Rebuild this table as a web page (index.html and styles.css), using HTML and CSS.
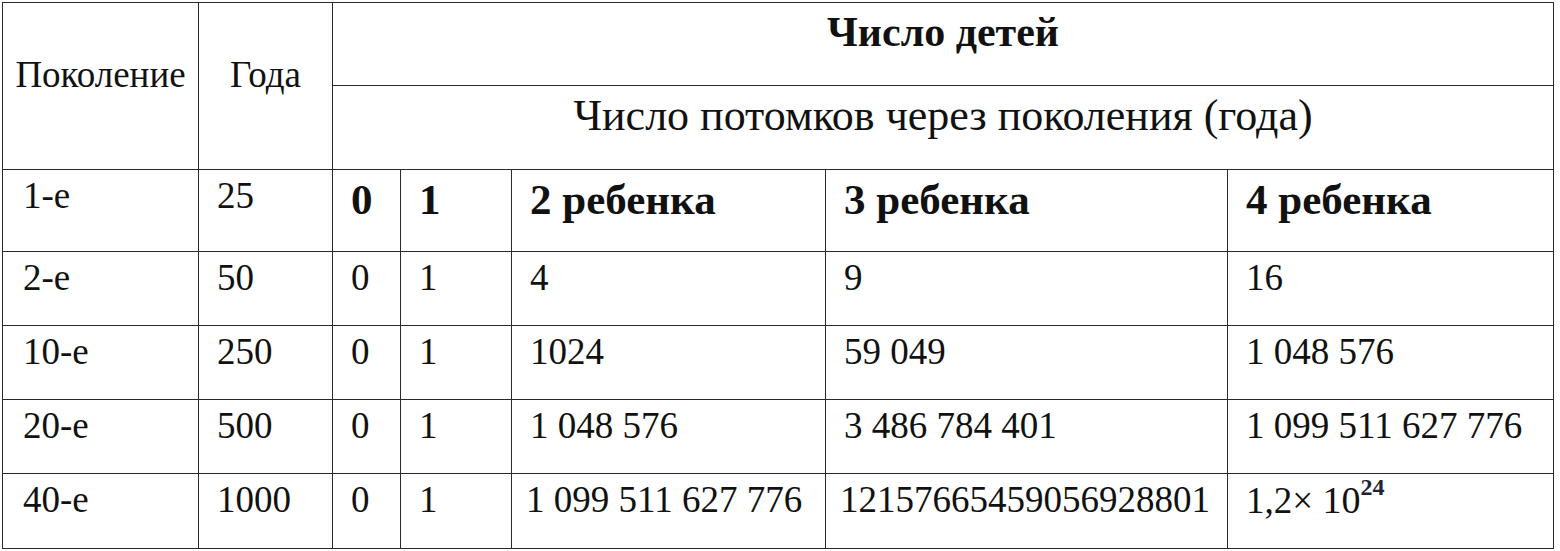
FILE: index.html
```html
<!DOCTYPE html>
<html lang="ru">
<head>
<meta charset="utf-8">
<title>Число детей</title>
<link rel="stylesheet" href="styles.css">
</head>
<body>
<table class="grid">
  <colgroup>
    <col class="c-gen">
    <col class="c-year">
    <col class="c-zero">
    <col class="c-one">
    <col class="c-two">
    <col class="c-three">
    <col class="c-four">
  </colgroup>
  <tr class="r-h1">
    <th class="head-side" rowspan="2">Поколение</th>
    <th class="head-side" rowspan="2">Года</th>
    <th class="head-main" colspan="5">Число детей</th>
  </tr>
  <tr class="r-h2">
    <th class="head-sub" colspan="5">Число потомков через поколения (года)</th>
  </tr>
  <tr class="r-1">
    <td class="gen">1-е</td>
    <td>25</td>
    <td class="bold">0</td>
    <td class="bold">1</td>
    <td class="bold">2 ребенка</td>
    <td class="bold">3 ребенка</td>
    <td class="bold">4 ребенка</td>
  </tr>
  <tr class="r-d">
    <td class="gen">2-е</td>
    <td>50</td>
    <td>0</td>
    <td>1</td>
    <td>4</td>
    <td>9</td>
    <td>16</td>
  </tr>
  <tr class="r-d">
    <td class="gen">10-е</td>
    <td>250</td>
    <td>0</td>
    <td>1</td>
    <td>1024</td>
    <td>59 049</td>
    <td>1 048 576</td>
  </tr>
  <tr class="r-d">
    <td class="gen">20-е</td>
    <td>500</td>
    <td>0</td>
    <td>1</td>
    <td>1 048 576</td>
    <td>3 486 784 401</td>
    <td>1 099 511 627 776</td>
  </tr>
  <tr class="r-d r-last">
    <td class="gen">40-е</td>
    <td>1000</td>
    <td>0</td>
    <td>1</td>
    <td class="tight">1 099 511 627 776</td>
    <td class="tight">12157665459056928801</td>
    <td>1,2× <span class="math">10<sup class="exp">24</sup></span></td>
  </tr>
</table>
</body>
</html>
```
FILE: styles.css
```css
html, body {
  margin: 0;
  padding: 0;
  background: #ffffff;
}

body {
  padding: 2px 0 0 2px;
  font-family: "Liberation Serif", "Times New Roman", "DejaVu Serif", serif;
  color: #111111;
}

.grid {
  border-collapse: collapse;
  table-layout: fixed;
  width: 1551px;
}

.c-gen { width: 196px; }
.c-year { width: 134px; }
.c-zero { width: 68px; }
.c-one { width: 111px; }
.c-two { width: 314px; }
.c-three { width: 402px; }
.c-four { width: 326px; }

.grid th,
.grid td {
  font-family: "Liberation Serif", "Times New Roman", "DejaVu Serif", serif;
  border: 1px solid #2a2a2a;
  box-sizing: border-box;
  overflow: hidden;
  white-space: nowrap;
}

.r-h1 { height: 83px; }
.r-h2 { height: 84px; }
.r-1 { height: 82px; }
.r-d { height: 74px; }
.r-last { height: 75px; }

.grid .head-side {
  font-weight: normal;
  font-size: 37px;
  text-align: center;
  vertical-align: top;
  padding: 50px 0 0 0;
}

.grid .head-main {
  font-weight: bold;
  font-size: 42px;
  text-align: center;
  vertical-align: top;
  padding: 5px 0 0 0;
}

.grid .head-sub {
  font-weight: normal;
  font-size: 44px;
  text-align: center;
  vertical-align: top;
  padding: 4px 0 0 0;
}

.grid td {
  font-size: 37px;
  text-align: left;
  vertical-align: top;
  padding: 4px 4px 0 18px;
}

.grid td.gen {
  padding-left: 20px;
}

.grid td.bold {
  font-weight: bold;
  font-size: 43px;
  padding-top: 5px;
}

.grid td.tight {
  padding-left: 14px;
}

.grid .math {
  font-size: 38px;
}

.grid .exp {
  font-size: 24px;
  color: #1c2536;
  font-weight: bold;
  vertical-align: 18px;
  line-height: 0;
}
```
